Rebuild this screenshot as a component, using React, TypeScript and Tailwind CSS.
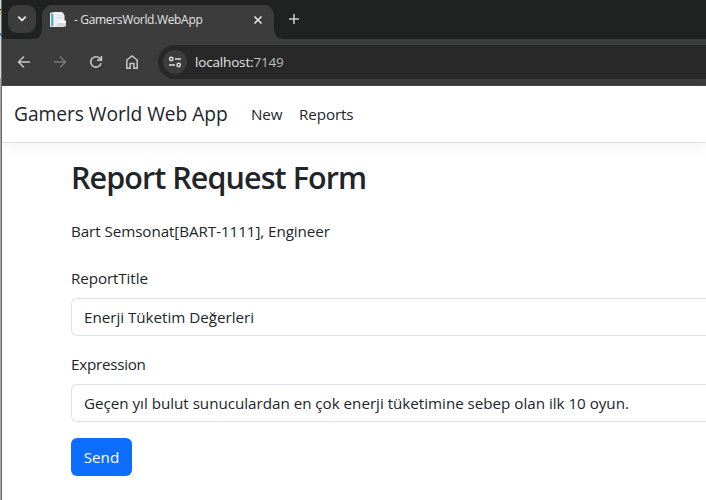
import React from "react";

function ReportIcon() {
  return (
    <svg width="18" height="18" viewBox="0 0 18 18" className="shrink-0">
      <path d="M1 2L4 1L13 1L15 3V16H1Z" fill="#d8dde0" />
      <path d="M1 2H5V15H1Z" fill="#f3f7f9" />
      <path d="M2 2.5H4.6V15H2Z" fill="#5eabd8" />
      <path d="M6 1H12L15.5 4V15H6Z" fill="#eceeef" />
      <path d="M5.3 1.5V16" stroke="#fff" />
      <path d="M8 4.5H14M8 6.5H14" stroke="#dbdee1" />
      <path d="M9 10H17V15.5H8Z" fill="#d6d9dd" />
      <path d="M9.5 9.5H17V12H8.5Z" fill="#fafafa" />
    </svg>
  );
}

function TabStrip() {
  return (
    <div className="flex h-[39px] bg-[#202221] pl-[6px] pt-[5px]">
      <div className="flex h-7 w-7 items-center justify-center rounded-[9px] bg-[#3c3c3c]">
        <svg width="10" height="8" viewBox="0 0 10 8" fill="none" stroke="#e8e8e8" strokeWidth="1.8">
          <path d="M1.3 1.7L5 5.4L8.7 1.7" />
        </svg>
      </div>
      <svg width="10" height="34" className="-ml-1 shrink-0">
        <path d="M0 34Q10 34 10 24V34Z" fill="#3c3c3c" />
      </svg>
      <div className="flex h-[34px] w-[232px] items-center rounded-t-[10px] bg-[#3c3c3c] pb-[5px] pl-[7px] pr-[10px]">
        <ReportIcon />
        <span className="ml-[7px] flex-1 whitespace-nowrap text-[12px] tracking-[-0.33px] text-[#e3e3e3]">
          - GamersWorld.WebApp
        </span>
        <svg width="12" height="12" viewBox="0 0 12 12" fill="none" stroke="#e3e3e3" strokeWidth="1.6">
          <path d="M2.5 2.5L9.5 9.5M9.5 2.5L2.5 9.5" />
        </svg>
      </div>
      <svg width="10" height="34" className="shrink-0">
        <path d="M0 24Q0 34 10 34H0Z" fill="#3c3c3c" />
      </svg>
      <svg width="12" height="12" viewBox="0 0 12 12" className="ml-1 mt-[8px]" stroke="#d0d0d0" strokeWidth="1.5">
        <path d="M6 1V11M1 6H11" />
      </svg>
    </div>
  );
}

function Toolbar() {
  return (
    <div className="flex h-[47px] items-center border-b border-[#484447] bg-[#3c3c3c]">
      <svg width="14" height="14" viewBox="0 0 14 14" fill="none" stroke="#c7c7c7" strokeWidth="1.5" className="ml-[15px]">
        <path d="M13 7H2M7 1.5L1.5 7L7 12.5" />
      </svg>
      <svg width="14" height="14" viewBox="0 0 14 14" fill="none" stroke="#777" strokeWidth="1.5" className="ml-[22px]">
        <path d="M1 7H12M7 1.5L12.5 7L7 12.5" />
      </svg>
      <svg width="14" height="14" viewBox="0 0 14 14" fill="none" stroke="#c7c7c7" strokeWidth="1.6" className="ml-[22px]">
        <path d="M12 8.2A5.2 5.2 0 1 1 10.8 3.4L12.4 5" />
        <path d="M12.4 1V5.3H8" />
      </svg>
      <svg width="14" height="16" viewBox="0 0 14 16" fill="none" stroke="#c7c7c7" strokeWidth="1.5" className="ml-[22px]">
        <path d="M1.8 6L7 2L12.2 6V14.2H8.9V9.5H5.1V14.2H1.8Z" />
      </svg>
      <div className="ml-[19px] flex h-[34px] flex-1 items-center rounded-l-full bg-[#282828] pl-[5px]">
        <div className="flex h-6 w-6 items-center justify-center rounded-full bg-[#3c3c3c]">
          <svg width="14" height="12" viewBox="0 0 14 12" fill="none" stroke="#dedede" strokeWidth="1.5">
            <circle cx="3.3" cy="3" r="1.7" />
            <path d="M7 3H13M1 9H7" />
            <circle cx="10.7" cy="9" r="1.7" />
          </svg>
        </div>
        <span className="ml-2 text-[13.5px] tracking-[-0.17px] text-[#e5e5e5]">
          localhost:<span className="text-[#bdbdbd]">7149</span>
        </span>
      </div>
    </div>
  );
}

function Field({ label, value, labelClass }: { label: string; value: string; labelClass: string }) {
  return (
    <div className="mb-4">
      <label className={"mb-2 block h-6 leading-6 " + labelClass}>{label}</label>
      <div className="flex h-[38px] items-center rounded-l-md border border-r-0 border-[#dee2e6] px-3">
        <span className="whitespace-nowrap tracking-[-0.02px]">{value}</span>
      </div>
    </div>
  );
}

function WindowEdge() {
  return (
    <div className="flex h-full w-[2px] shrink-0 flex-col border-r border-[#6a6a6a] bg-[#a9a9a9]">
      <div className="h-[9px] bg-[#d3dcdb]" />
      <div className="h-px bg-[#111]" />
      <div className="h-[5px] bg-[#d8bd8c]" />
      <div className="h-[18px] bg-[#d3dcdb]" />
      <div className="h-[3px] bg-[#2f7dc0]" />
      <div className="h-[42px] bg-[#d8dcdc]" />
    </div>
  );
}

export default function App() {
  return (
    <div className="flex h-[500px] w-[706px] overflow-hidden bg-white font-['Open_Sans','Noto_Sans',sans-serif] text-[15.2px] text-[#212529]">
      <WindowEdge />
      <div className="min-w-0 flex-1">
        <TabStrip />
        <Toolbar />
        <nav className="flex h-[57px] items-center whitespace-nowrap border-b border-[#dee2e6] pl-3 shadow-[0_4px_12px_rgba(0,0,0,0.05)]">
          <span className="w-[237px] text-[19.2px] tracking-[-0.05px]">Gamers World Web App</span>
          <span className="w-12 tracking-[-0.1px]">New</span>
          <span className="tracking-[-0.1px]">Reports</span>
        </nav>
        <main className="pl-[69px] pt-[15px]">
          <h1 className="h-[38px] whitespace-nowrap text-[30.5px] font-semibold leading-[38px] tracking-[-0.93px]">
            Report Request Form
          </h1>
          <p className="mt-[23px] h-6 leading-6 tracking-[-0.07px]">Bart Semsonat[BART-1111], Engineer</p>
          <form className="mt-[23px]">
            <Field label="ReportTitle" value="Enerji Tüketim Değerleri" labelClass="tracking-[-0.1px]" />
            <Field
              label="Expression"
              value="Geçen yıl bulut sunuculardan en çok enerji tüketimine sebep olan ilk 10 oyun."
              labelClass="tracking-[-0.25px]"
            />
            <button type="button" className="h-[38px] w-[61px] rounded-md bg-[#0d6efd] text-white">
              Send
            </button>
          </form>
        </main>
      </div>
    </div>
  );
}
